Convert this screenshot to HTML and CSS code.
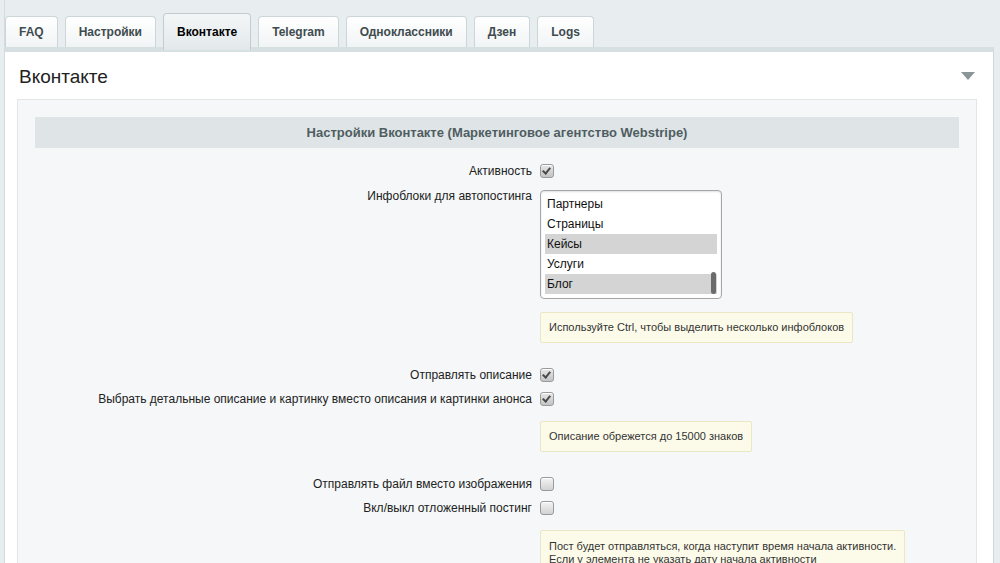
FILE: index.html
```html
<!DOCTYPE html>
<html lang="ru">
<head>
  <meta charset="UTF-8">
  <meta name="viewport" content="width=device-width, initial-scale=1.0">
  <title>Вконтакте — настройки</title>
  <link rel="stylesheet" href="styles.css">
</head>
<body>
  <div class="page">
    <div class="tabs">
      <a class="tab" href="#">FAQ</a>
      <a class="tab" href="#">Настройки</a>
      <a class="tab tab-active" href="#">Вконтакте</a>
      <a class="tab" href="#">Telegram</a>
      <a class="tab" href="#">Одноклассники</a>
      <a class="tab" href="#">Дзен</a>
      <a class="tab" href="#">Logs</a>
    </div>

    <div class="panel">
      <div class="panel-head">
        <h1>Вконтакте</h1>
        <span class="collapse"></span>
      </div>

      <div class="content">
        <div class="section-title">Настройки Вконтакте (Маркетинговое агентство Webstripe)</div>

        <div class="row">
          <label class="row-label">Активность</label>
          <span class="check checked"></span>
        </div>

        <div class="row row-top">
          <label class="row-label">Инфоблоки для автопостинга</label>
          <div class="listbox">
            <div class="option">Партнеры</div>
            <div class="option">Страницы</div>
            <div class="option selected">Кейсы</div>
            <div class="option">Услуги</div>
            <div class="option selected">Блог</div>
            <span class="scroll-thumb"></span>
          </div>
        </div>

        <div class="hint-row hint-first">
          <div class="hint">Используйте Ctrl, чтобы выделить несколько инфоблоков</div>
        </div>

        <div class="row">
          <label class="row-label">Отправлять описание</label>
          <span class="check checked"></span>
        </div>
        <div class="row">
          <label class="row-label">Выбрать детальные описание и картинку вместо описания и картинки анонса</label>
          <span class="check checked"></span>
        </div>

        <div class="hint-row">
          <div class="hint">Описание обрежется до 15000 знаков</div>
        </div>

        <div class="row">
          <label class="row-label">Отправлять файл вместо изображения</label>
          <span class="check"></span>
        </div>
        <div class="row">
          <label class="row-label">Вкл/выкл отложенный постинг</label>
          <span class="check"></span>
        </div>

        <div class="hint-row">
          <div class="hint hint-long">Пост будет отправляться, когда наступит время начала активности.<br>Если у элемента не указать дату начала активности</div>
        </div>
      </div>
    </div>
  </div>
</body>
</html>
```

FILE: styles.css
```css
body {
  margin: 0;
  background-color: #e8eef0;
  font-family: "Liberation Sans", Arial, sans-serif;
  color: #222;
  overflow: hidden;
}

.page {
  height: 563px;
  border-left: 1px solid #d3dbde;
  margin-left: 4px;
}

/* tabs */
.tabs {
  display: flex;
  align-items: flex-end;
  gap: 7px;
  height: 47px;
}

.tab {
  display: block;
  height: 30px;
  line-height: 30px;
  padding: 0 13px;
  font-size: 12px;
  font-weight: bold;
  color: #3f4b4f;
  text-decoration: none;
  background: linear-gradient(#ffffff, #f1f4f5);
  border: 1px solid #ccd5d8;
  border-bottom: none;
  border-radius: 4px 4px 0 0;
}

.tab-active {
  height: 36px;
  line-height: 36px;
  margin-bottom: -3px;
  color: #000;
  background: linear-gradient(#f3f6f7, #e3e9eb);
  border-color: #c3cdd0;
  position: relative;
}

/* panel */
.panel {
  border-top: 5px solid #d6dfe2;
  border-right: 1px solid #cfd8db;
  margin-right: 6px;
  background-color: #fff;
  padding: 0 16px 0 12px;
  height: 520px;
}

.panel-head {
  display: flex;
  align-items: center;
  justify-content: space-between;
  height: 47px;
  padding-top: 2px;
  box-sizing: border-box;
}

.panel-head h1 {
  margin: 0 0 0 2px;
  font-size: 19px;
  font-weight: normal;
  color: #222;
}

.collapse {
  width: 0;
  height: 0;
  border-left: 7px solid transparent;
  border-right: 7px solid transparent;
  border-top: 8px solid #8b9598;
  margin-right: 2px;
  margin-top: -2px;
}

.content {
  background-color: #f5f7f8;
  border: 1px solid #e1e6e8;
  padding: 17px 17px 0;
  height: 480px;
}

.section-title {
  height: 31px;
  line-height: 31px;
  background-color: #dfe5e6;
  text-align: center;
  font-size: 13px;
  font-weight: bold;
  color: #4f5d62;
  margin-bottom: 11px;
}

/* form rows */
.row {
  display: grid;
  grid-template-columns: 497px 1fr;
  column-gap: 8px;
  align-items: center;
  min-height: 24px;
  font-size: 12px;
}

.row-top {
  align-items: start;
}

.row-top .row-label {
  padding-top: 5px;
  line-height: 17px;
}

.row-label {
  text-align: right;
}

.check {
  display: block;
  width: 12px;
  height: 12px;
  border: 1px solid #9a9a9a;
  border-radius: 3px;
  background: linear-gradient(#f4f4f4, #d2d2d2);
  box-shadow: inset 0 1px 0 #fff;
  position: relative;
}

.check.checked {
  background: linear-gradient(#e6e6e6, #c4c4c4);
}

.check.checked::after {
  content: "";
  position: absolute;
  left: 3px;
  top: 1px;
  width: 3px;
  height: 6px;
  border: solid #4a4a4a;
  border-width: 0 2px 2px 0;
  transform: rotate(40deg);
}

.listbox {
  position: relative;
  width: 172px;
  margin-top: 7px;
  padding: 3px 4px 4px;
  background-color: #fff;
  border: 1px solid #a6a6a6;
  border-radius: 4px;
  box-shadow: inset 0 1px 2px rgba(0, 0, 0, 0.12);
}

.option {
  height: 20px;
  line-height: 20px;
  padding-left: 2px;
  font-size: 12px;
  color: #111;
}

.option.selected {
  background-color: #d4d4d4;
}

.scroll-thumb {
  position: absolute;
  right: 5px;
  bottom: 4px;
  width: 5px;
  height: 22px;
  border-radius: 3px;
  background-color: #6b6b6b;
}

.hint-row {
  padding-left: 505px;
  margin: 10px 0 20px;
}

.hint-first {
  margin-top: 13px;
}

.hint {
  display: inline-block;
  padding: 0 8px;
  height: 29px;
  line-height: 29px;
  font-size: 11px;
  color: #333;
  background-color: #fcfbe9;
  border: 1px solid #ebe6c4;
  border-radius: 2px;
}

.hint-long {
  height: auto;
  line-height: 13px;
  padding: 9px 8px;
}
```
